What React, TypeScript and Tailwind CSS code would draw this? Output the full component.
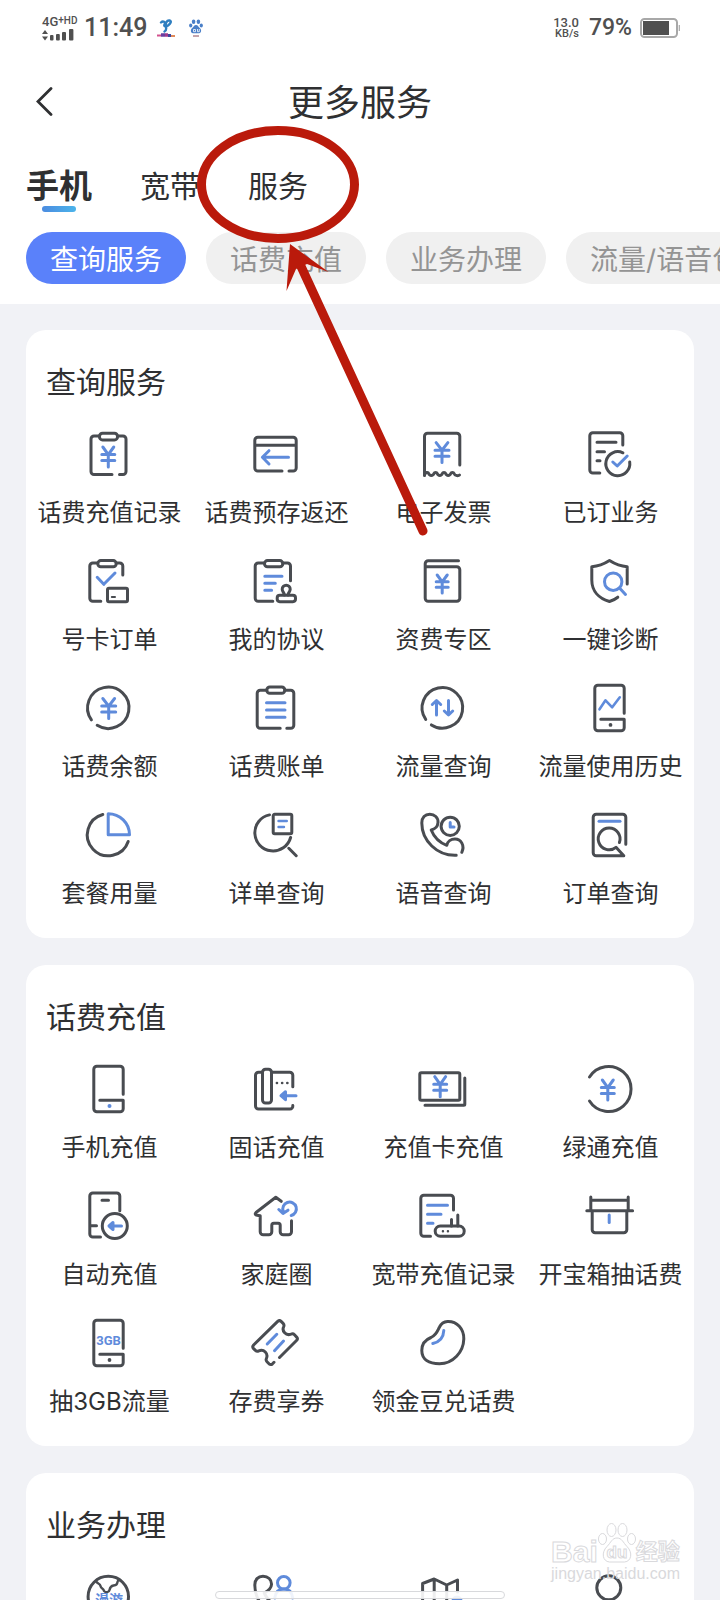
import React from "react";
import { clsx } from "clsx";

const DARK = "#494c51";
const BLUE = "#5f8bdb";

type YenProps = { x: number; y: number; w?: number; h?: number };

// Yuan sign, centred on x / y
const Yen = ({ x, y, w = 13, h = 20 }: YenProps) => (
  <path
    stroke={BLUE}
    d={`M${x - w * 0.42} ${y - h / 2}L${x} ${y - h * 0.12}L${x + w * 0.42} ${y - h / 2}M${x - w / 2} ${y - h * 0.12}h${w}M${x - w / 2} ${y + h * 0.18}h${w}M${x} ${y - h * 0.12}V${y + h / 2}`}
  />
);

const PhoneBody = () => (
  <path d="M38.2 29.3V4.3a3 3 0 0 0-3-3H11.8a3 3 0 0 0-3 3v39.4a3 3 0 0 0 3 3h23.4a3 3 0 0 0 3-3v-8.4H14.8" />
);

const icons: Record<string, React.ReactNode> = {
  rechargeRecord: (
    <>
      <path d="M14.5 6H9a3 3 0 0 0-3 3v32.6a3 3 0 0 0 3 3h18M34.5 44.6H38a3 3 0 0 0 3-3V9a3 3 0 0 0-3-3h-5.5" />
      <rect x="14.5" y="3.3" width="18" height="6.6" rx="3" />
      <Yen x={23.3} y={27} />
    </>
  ),
  refund: (
    <>
      <path d="M30 41H5.8a3 3 0 0 1-3-3V10.3a3 3 0 0 1 3-3h35.4a3 3 0 0 1 3 3V38a3 3 0 0 1-3 3H37M2.8 15.3h41.4" />
      <path stroke={BLUE} d="M36.5 27.3H11M17 20.7l-6.6 6.6L17 34" />
    </>
  ),
  invoice: (
    <>
      <path d="M40.8 35V6.3a3 3 0 0 0-3-3H8.5a3 3 0 0 0-3 3v39.2" />
      <path d="M5.5 45c.8-3 3.6-3 4.2-1.4c.8 2.4 4.4 2.4 5.2 0c.6-1.4 2.8-1.4 3.4 0c.8 2.4 4.2 2.4 5 0c.6-1.4 2.8-1.4 3.4 0c.8 2.4 4.2 2.4 5 0c.6-1.4 2.8-1.4 3.4 0c.8 2.4 4.4 2.4 5.4 1.4" />
      <Yen x={23} y={22.6} w={14} />
    </>
  ),
  subscribed: (
    <>
      <path d="M36.8 15V5.7a3 3 0 0 0-3-3h-27a3 3 0 0 0-3 3V40a3 3 0 0 0 3 3h7M11 12.3h19M11 21.7h7.5M11 30.7h3M43.7 32A12 12 0 1 1 36.9 22.8" />
      <path stroke={BLUE} d="M26.8 32l4.4 4 10-10" />
    </>
  ),
  cardOrder: (
    <>
      <path d="M12.8 6h-5a3 3 0 0 0-3 3v32.3a3 3 0 0 0 3 3h8M31.2 6h3.6a3 3 0 0 1 3 3v9" />
      <rect x="12.8" y="3.6" width="18.4" height="6.2" rx="3" />
      <rect x="22.5" y="31.3" width="20" height="13.4" rx="1.5" />
      <path strokeWidth="2" d="M26.8 40h3.2" />
      <path stroke={BLUE} d="M12.2 20.3l6.6 7L30 16" />
    </>
  ),
  agreement: (
    <>
      <path d="M12.5 6H6.2a3 3 0 0 0-3 3v32.3a3 3 0 0 0 3 3h14.6M30.8 6h4.7a3 3 0 0 1 3 3v14.7" />
      <rect x="12.5" y="3.6" width="18.3" height="6.2" rx="3" />
      <rect x="25.2" y="38.3" width="18.3" height="6.4" rx="2.6" />
      <path d="M32.4 38c0-2-2.2-3.4-2.2-5.8a4 4 0 0 1 8 0c0 2.4-2.2 3.8-2.2 5.8" />
      <path stroke={BLUE} d="M12.8 19.3H30M12.8 26.3h10.5M12.8 33.3h6.8" />
    </>
  ),
  tariff: (
    <>
      <path d="M39.5 3.7H9.2a3 3 0 0 0-3 3v34.6a3 3 0 0 0 3 3h28.6a3 3 0 0 0 3-3V12.7a3 3 0 0 0-3-3H6.2" />
      <Yen x={23.2} y={27} w={12} h={18} />
    </>
  ),
  diagnose: (
    <>
      <path d="M41.2 27V9.7C34 9.2 29 7 23.5 3.5C18 7 13 9.2 5.8 9.7V23C5.8 34 13 41.5 23.5 44.5C27 43.5 29.5 42 31.8 40.2" />
      <g stroke={BLUE}>
        <circle cx="27.2" cy="24.7" r="8.7" />
        <path d="M33.5 31l6 6.5" />
      </g>
    </>
  ),
  balance: (
    <>
      <path d="M12.2 41.3A20.7 20.7 0 1 0 6.4 35.8" />
      <Yen x={23.7} y={24.5} w={14} />
    </>
  ),
  bill: (
    <>
      <path d="M14.8 6.3H8.2a3 3 0 0 0-3 3v32a3 3 0 0 0 3 3h20M34.8 44.3h4a3 3 0 0 0 3-3v-32a3 3 0 0 0-3-3h-6" />
      <rect x="14.8" y="2.9" width="18" height="6.3" rx="3" />
      <path stroke={BLUE} d="M14.5 18.7H33M14.5 26H33M14.5 33.3H33" />
    </>
  ),
  dataQuery: (
    <>
      <path d="M12.4 40.9A20.3 20.3 0 1 0 6.7 35.4" />
      <path stroke={BLUE} d="M17.5 31V17M13.3 20.5l4.2-4 4.2 4M29.5 16.5v14M25.3 27l4.2 4 4.2-4" />
    </>
  ),
  dataHistory: (
    <>
      <PhoneBody />
      <circle cx="24.5" cy="40.9" r="1.9" fill={DARK} stroke="none" />
      <path stroke={BLUE} strokeWidth="2.6" d="M13.5 25.3l6-9 6.7 7 7.6-10" />
    </>
  ),
  packageUsage: (
    <>
      <path d="M17.8 3.5A21 21 0 1 0 43.2 30.5" />
      <path stroke={BLUE} d="M23.2 2.7v21h21.3A21.3 21 0 0 0 23.2 2.7z" />
    </>
  ),
  detailQuery: (
    <>
      <path d="M17.5 3.9A18.2 18.2 0 1 0 38.6 26.5M36.8 37.3l7.4 7.4" />
      <rect x="21.2" y="3.3" width="18.6" height="19.4" rx="1.5" />
      <path stroke={BLUE} strokeWidth="2.4" d="M26.5 10h8.3M26.5 16h5.5" />
    </>
  ),
  voiceQuery: (
    <>
      <path d="M37.2 44.3C18 45 2.8 29.5 2.8 12C2.8 6.5 6 3.3 10.8 3.3C15.5 3.3 19.3 6.5 19 11.5C18.8 15 16 18 12.2 19C15 26 20 31.5 27.8 34.3C28.5 30.5 32 28 36 28C42 28 46 34.5 42.8 41.3" />
      <circle cx="31.2" cy="15.3" r="9.1" />
      <path stroke={BLUE} d="M31.2 11.5V16h3.8" />
    </>
  ),
  orderQuery: (
    <>
      <path d="M39.8 33.3v-27a3 3 0 0 0-3-3H10.2a3 3 0 0 0-3 3v35.4a3 3 0 0 0 3 3h27.6L30 36.3A10.9 10.9 0 1 1 33.4 31.5" />
      <path stroke={BLUE} d="M13 10.3h21" />
    </>
  ),
  phoneRecharge: (
    <>
      <PhoneBody />
      <circle cx="24.5" cy="41" r="2" fill={BLUE} stroke="none" />
    </>
  ),
  landline: (
    <>
      <path d="M10.5 7.3h-4a3 3 0 0 0-3 3V41a3 3 0 0 0 3 3h31.3a3 3 0 0 0 3-3.5M19.5 7.3h18.3a3 3 0 0 1 3 3v11.4" />
      <rect x="10.5" y="4.3" width="9" height="33.7" rx="3" />
      <path strokeWidth="2.6" d="M24.9 18h.1M30.1 18h.1M35.3 18h.1" />
      <path stroke={BLUE} fill={BLUE} d="M44 30.7H29M33.5 26.7l-4.5 4 4.5 4z" />
    </>
  ),
  cardRecharge: (
    <>
      <rect x=".8" y="7.7" width="40" height="27.6" rx="1.5" />
      <path d="M45.8 13v26.3a1 1 0 0 1-1 1H6" />
      <Yen x={21.2} y={21.7} />
    </>
  ),
  greenRecharge: (
    <>
      <path d="M3.5 12A22.5 22.5 0 1 1 3.5 36" />
      <Yen x={21.8} y={25} />
    </>
  ),
  autoRecharge: (
    <>
      <path d="M34.8 18.7V4a3 3 0 0 0-3-3h-24a3 3 0 0 0-3 3v38a3 3 0 0 0 3 3h7.7M17 8.3h6.5M5 33.7h6.5" />
      <circle cx="29.8" cy="34" r="12.5" />
      <path stroke={BLUE} fill={BLUE} d="M36.5 34H24M28 30.5L24 34l4 3.5z" />
    </>
  ),
  family: (
    <>
      <path d="M29.2 9.3l-5.4-4L4 20.5c-1.5 1.5-.5 2.7 1 2.8l3.2.4v16a3 3 0 0 0 3 3h5.6a3 3 0 0 0 3-3v-6.4a2 2 0 0 1 2-2h4.4a2 2 0 0 1 2 2v6.4a3 3 0 0 0 3 3h5.3a3 3 0 0 0 3-3v-11" />
      <path stroke={BLUE} d="M39.2 23.5A6.8 6.8 0 1 0 31.3 19.5M26.8 17.5l4.2 4 5-3.3" />
    </>
  ),
  broadbandRecord: (
    <>
      <path d="M34.5 18V6.3a3 3 0 0 0-3-3H4.8a3 3 0 0 0-3 3v35a3 3 0 0 0 3 3h6.7M32.5 27.5V34M38.8 23v11" />
      <rect x="16.2" y="34" width="29" height="10.3" rx="5.1" />
      <path strokeWidth="2.4" d="M23.9 39.3h.1M28.9 39.3h.1" />
      <path stroke={BLUE} d="M8.5 13.3h20M8.5 22.3h13.5M8.5 31.3h5.5" />
    </>
  ),
  treasure: (
    <>
      <path d="M4.8 5v13M42.2 5v13M4.8 8.3h37.4M.8 18.7h45.8M6.2 19v18.7a3 3 0 0 0 3 3h28.6a3 3 0 0 0 3-3V19" />
      <path stroke={BLUE} d="M23.2 23v7.5" />
    </>
  ),
  draw3gb: (
    <>
      <PhoneBody />
      <circle cx="24.5" cy="41" r="1.9" fill={DARK} stroke="none" />
      <text
        x="23.5"
        y="25.5"
        textAnchor="middle"
        fontSize="13"
        fill={BLUE}
        stroke="none"
        className="font-[Roboto,sans-serif] font-bold"
      >
        3GB
      </text>
    </>
  ),
  coupon: (
    <>
      <path d="M27.5 38.5l17-17q1.8-1.8 0-3.6l-2-2.2q-1.5-1.5-3.5-.6c-5 2-9.5-3-7.3-7.5q.8-1.8-.6-3.2l-2-2q-1.6-1.6-3.4 0L1.6 26q-1.7 1.8 0 3.6l1.8 1.8q1.5 1.4 3.4.5c5-2.2 9.8 2.6 7.6 7.6q-.8 1.9.6 3.3l2 2q1.8 1.5 3.5 0l1.5-1.5" />
      <path stroke={BLUE} d="M15.2 25l9.6-9.7M22.5 31.7l9-9.7" />
    </>
  ),
  bean: (
    <>
      <path d="M28.5 2.4C38 2 45 10 44.8 20C44.5 33 34 44.7 20.5 44.7C10 44.7 2.8 40.5 2.8 31.5C2.8 24 7 20.5 12 18.5C17.5 16 18.5 12 20.5 8C22 4.8 24.5 2.6 28.5 2.4z" />
      <path stroke={BLUE} d="M24.8 11.5C24.5 18 20.5 23 13.8 24.5" />
    </>
  ),
  roaming: (
    <>
      <circle cx="23.3" cy="23.5" r="20.2" />
      <path strokeWidth="2.4" d="M11 8c1 3 4 2 4.5 5s3 2 3.5 5c2 2 5 1.500 5.500-1s1-4 4-4.500s3.500-1 4-3.500s2-2 3-1.500" />
      <text x="24" y="32" textAnchor="middle" fontSize="14" fontWeight="700" fill={BLUE} stroke="none">
        漫游
      </text>
    </>
  ),
  callPerson: (
    <>
      <path d="M37.2 44.3C18 45 2.8 29.5 2.8 12C2.8 6.5 6 3.3 11 3.3C16 3.3 19.7 6.5 19.5 11.5C19.3 16 16 18 12.2 20C15 26 20 31.5 27.8 34.3" />
      <g stroke={BLUE}>
        <circle cx="31.8" cy="9.8" r="6.3" />
        <path d="M22.8 25C23.5 19 27 16 31.8 16C36.5 16 40 19 40.7 25" />
      </g>
    </>
  ),
  map: (
    <>
      <path d="M3.6 42V10.5L15.2 6l12.5 6 10.8-5v12M15.2 6v32M27.7 12v30" />
      <circle cx="38" cy="28" r="4" fill={BLUE} stroke={BLUE} />
    </>
  ),
  profile: (
    <>
      <circle cx="22.8" cy="14.8" r="12" />
      <path d="M4 46c0-11 8-18 19-18s19 7 19 18" />
    </>
  ),
};

const sections = [
  {
    title: "查询服务",
    items: [
      { icon: "rechargeRecord", label: "话费充值记录" },
      { icon: "refund", label: "话费预存返还" },
      { icon: "invoice", label: "电子发票" },
      { icon: "subscribed", label: "已订业务" },
      { icon: "cardOrder", label: "号卡订单" },
      { icon: "agreement", label: "我的协议" },
      { icon: "tariff", label: "资费专区" },
      { icon: "diagnose", label: "一键诊断" },
      { icon: "balance", label: "话费余额" },
      { icon: "bill", label: "话费账单" },
      { icon: "dataQuery", label: "流量查询" },
      { icon: "dataHistory", label: "流量使用历史" },
      { icon: "packageUsage", label: "套餐用量" },
      { icon: "detailQuery", label: "详单查询" },
      { icon: "voiceQuery", label: "语音查询" },
      { icon: "orderQuery", label: "订单查询" },
    ],
  },
  {
    title: "话费充值",
    items: [
      { icon: "phoneRecharge", label: "手机充值" },
      { icon: "landline", label: "固话充值" },
      { icon: "cardRecharge", label: "充值卡充值" },
      { icon: "greenRecharge", label: "绿通充值" },
      { icon: "autoRecharge", label: "自动充值" },
      { icon: "family", label: "家庭圈" },
      { icon: "broadbandRecord", label: "宽带充值记录" },
      { icon: "treasure", label: "开宝箱抽话费" },
      { icon: "draw3gb", label: "抽3GB流量" },
      { icon: "coupon", label: "存费享券" },
      { icon: "bean", label: "领金豆兑话费" },
    ],
  },
  {
    title: "业务办理",
    items: [{ icon: "roaming" }, { icon: "callPerson" }, { icon: "map" }, { icon: "profile" }],
  },
];

const tabs = ["手机", "宽带", "服务"];
const pills = ["查询服务", "话费充值", "业务办理", "流量/语音包"];

const ServiceItem = ({ icon, label }: { icon: string; label?: string }) => (
  <button type="button" className="flex flex-col items-center">
    <svg
      viewBox="1 0 48 48"
      className="h-12 w-12 overflow-visible"
      fill="none"
      stroke={DARK}
      strokeWidth="3"
      strokeLinecap="round"
      strokeLinejoin="round"
    >
      {icons[icon]}
    </svg>
    {label && <span className="mt-[19px] text-2xl leading-8 whitespace-nowrap">{label}</span>}
  </button>
);

const StatusBar = () => (
  <div className="flex h-14 items-center justify-between pr-10 pl-[42px] font-[Roboto,'Noto_Sans_CJK_SC',sans-serif] text-[#505050]">
    <div className="flex items-center">
      <div className="w-[38px]">
        <div className="flex items-start text-[13px] leading-3 font-medium">
          4G<span className="text-[10px] leading-2">+</span>
          <span className="text-[10px] leading-[10px]">HD</span>
        </div>
        <svg viewBox="0 0 32 12" className="mt-px h-3 w-8" fill="#505050">
          <path d="M0 5l3-4 3 4zM0 7.5l3 4 3-4z" />
          <rect x="8" y="6" width="3.5" height="5.5" rx="1" />
          <rect x="14" y="5" width="3.8" height="6.5" rx="1" />
          <rect x="20" y="3" width="4" height="8.5" rx="1" />
          <rect x="27" y="0" width="4.400" height="11.5" rx="1" />
        </svg>
      </div>
      <span className="ml-1 text-[25px] leading-8 font-medium">11:49</span>
      <svg viewBox="0 0 18 19" className="ml-[10px] h-[19px] w-[18px]">
        <path
          d="M4 3.5C6 1.5 9 3 7.5 5.5C6.5 7.5 9 8 11 6.5C13.5 4.5 15 2 12.5 1.5C10 1 8 4 9 8C9.5 10.5 8.5 12 7.5 12.5"
          fill="none"
          stroke="#2f7fc0"
          strokeWidth="2.4"
          strokeLinecap="round"
        />
        <path d="M0 16.500h4" stroke="#d2528e" strokeWidth="2" />
        <path d="M4 16h4" stroke="#6a3fa0" strokeWidth="3.500" />
        <path d="M8 16h3" stroke="#a03a8c" strokeWidth="3.500" />
        <path d="M11 16.500h3" stroke="#3a48a0" strokeWidth="3" />
        <path d="M14 17h4" stroke="#e08a5a" strokeWidth="2" />
      </svg>
      <svg viewBox="0 0 14 18" className="ml-[14px] h-[18px] w-[14px]" fill="#4a7fc8">
        <ellipse cx="4.600" cy="2.800" rx="1.800" ry="2.300" />
        <ellipse cx="9.400" cy="2.800" rx="1.800" ry="2.300" />
        <ellipse cx="1.700" cy="6.500" rx="1.600" ry="2" />
        <ellipse cx="12.300" cy="6.500" rx="1.600" ry="2" />
        <path d="M7 6c2 0 2.500 2 4 3.300c1.500 1.200 1.800 4.700-1 4.900H4c-2.800-.2-2.500-3.700-1-4.900C4.500 8 5 6 7 6z" />
        <path d="M4.500 10.500h2v2.200h-2zM8.500 10v2.700h1.800V10" fill="none" stroke="#fff" strokeWidth=".8" />
        <path d="M4 17h6" stroke="#8a4a5a" strokeWidth="1" />
      </svg>
    </div>
    <div className="flex items-center">
      <div className="text-right text-[13px] leading-[11px] font-medium">
        <div>13.0</div>
        <div className="text-[11px]">KB/s</div>
      </div>
      <span className="ml-[10px] text-[23px] leading-8 font-medium">79%</span>
      <svg viewBox="0 0 40 20" className="ml-2 h-5 w-10">
        <rect x="1" y="1" width="36" height="18" rx="3.5" fill="#fff" stroke="#a8a8a8" strokeWidth="2" />
        <rect x="3" y="3" width="26" height="14" fill="#505050" />
        <path d="M39.300 7v6" stroke="#a8a8a8" strokeWidth="1.2" />
      </svg>
    </div>
  </div>
);

const Annotation = () => (
  <svg
    viewBox="0 0 240 420"
    className="pointer-events-none absolute top-[120px] left-[190px] h-[420px] w-[240px]"
    fill="none"
    stroke="#ba1a0b"
    strokeWidth="9"
  >
    <ellipse cx="88" cy="64.5" rx="76.5" ry="54" />
    <path d="M109 142L233 411" strokeLinecap="round" />
    <path d="M100 124L138.5 152L117 144L106 149L96.5 171z" fill="#ba1a0b" stroke="none" />
  </svg>
);

const Watermark = () => (
  <div className="pointer-events-none absolute right-10 bottom-4 font-['Liberation_Sans','Noto_Sans_CJK_SC',sans-serif] text-white/80">
    <div className="flex items-end [-webkit-text-stroke:1px_#d9d9dc]">
      <span className="text-3xl leading-6 font-bold">Bai</span>
      <svg viewBox="0 0 38 42" className="h-[42px] w-[38px]" fill="#fff" stroke="#d9d9dc">
        <ellipse cx="13.5" cy="8" rx="4.5" ry="6.5" />
        <ellipse cx="24.5" cy="8" rx="4.5" ry="6.5" />
        <ellipse cx="4.5" cy="17" rx="4" ry="5.5" />
        <ellipse cx="33.5" cy="17" rx="4" ry="5.5" />
        <path d="M19 16c5 0 6 4.5 10 8.5c6 6 4.5 15-2.500 15.500H11.500C4.500 39.500 3 30.500 9 24.500C13 20.500 14 16 19 16z" />
        <text x="19" y="36" textAnchor="middle" fontSize="17" fontWeight="700">
          du
        </text>
      </svg>
      <span className="text-[22px] leading-6 font-bold">经验</span>
    </div>
    <div className="text-base leading-5 text-[#d9d9dc]">jingyan.baidu.com</div>
  </div>
);

export default function App() {
  return (
    <div className="relative flex h-screen flex-col overflow-hidden bg-[#f1f2f6] font-[Inter,'Noto_Sans_CJK_SC',sans-serif] text-[#2f3032]">
      <header className="bg-white">
        <StatusBar />
        <div className="flex h-[92px] items-center">
          <button type="button" aria-label="返回" className="w-[72px] pl-9">
            <svg viewBox="0 0 18 30" className="h-[30px] w-[18px]" fill="none" stroke="#2f3032" strokeWidth="2.8" strokeLinecap="round">
              <path d="M15 1.500L2 14.500l13 13" />
            </svg>
          </button>
          <h1 className="flex-1 pt-0.5 text-center text-4xl">更多服务</h1>
          <div className="w-[72px]" />
        </div>
        <nav className="flex h-[76px] items-center gap-12 px-[26px]">
          {tabs.map((tab, i) => (
            <button
              key={tab}
              type="button"
              className={clsx("relative leading-10", i === 0 ? "text-[33px] font-bold" : "text-3xl")}
            >
              {tab}
              {i === 0 && (
                <span className="absolute -bottom-1.5 left-1/2 h-1.5 w-[34px] -translate-x-1/2 rounded-full bg-linear-to-r from-[#4b8be0] to-[#4bb4ea]" />
              )}
            </button>
          ))}
        </nav>
        <div className="flex gap-5 overflow-hidden pt-2 pb-5 pl-[26px]">
          {pills.map((pill, i) => (
            <button
              key={pill}
              type="button"
              className={clsx(
                "h-[52px] shrink-0 rounded-full px-6 pt-1 text-[28px] leading-8",
                i === 0 ? "bg-[#5a81fa] text-white" : "bg-[#f0f0f0] text-[#949494]"
              )}
            >
              {pill}
            </button>
          ))}
        </div>
      </header>

      <main className="flex min-h-0 flex-1 flex-col gap-[27px] overflow-hidden px-[26px] pt-[26px]">
        {sections.map((section) => (
          <section key={section.title} className="shrink-0 rounded-[20px] bg-white pt-8 pb-7">
            <h2 className="px-5 text-3xl leading-10">{section.title}</h2>
            <div className="mt-7 grid grid-cols-4 gap-y-7">
              {section.items.map((item) => (
                <ServiceItem key={item.icon} {...item} />
              ))}
            </div>
          </section>
        ))}
      </main>

      <Annotation />
      <Watermark />
      <div className="absolute bottom-px left-1/2 h-2 w-[290px] -translate-x-1/2 rounded-full border border-[#d8d9dc] bg-white/90" />
    </div>
  );
}
